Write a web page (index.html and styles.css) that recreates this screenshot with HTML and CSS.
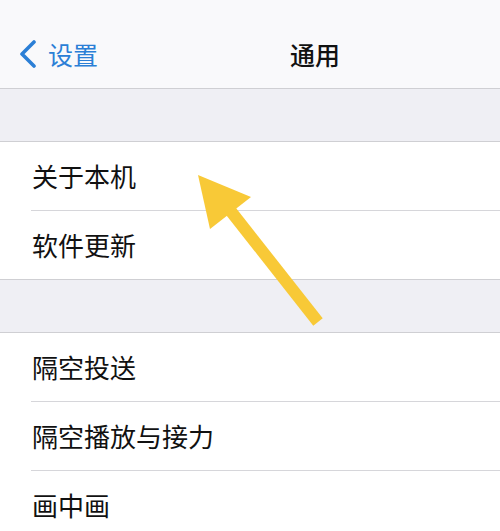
FILE: index.html
```html
<!DOCTYPE html>
<html lang="zh-CN">
<head>
<meta charset="utf-8">
<link rel="stylesheet" href="styles.css">
</head>
<body>
<div class="screen">
  <header class="nav">
    <div class="back">
      <svg class="chev" width="20" height="28" viewBox="0 0 20 28"><path d="M16 2 L4 14 L16 26" fill="none" stroke="#2b7fd6" stroke-width="3.6" stroke-linecap="round" stroke-linejoin="round"/></svg>
      <span class="back-label">设置</span>
    </div>
    <div class="title">通用</div>
  </header>
  <div class="spacer"></div>
  <div class="group">
    <div class="row">关于本机</div>
    <div class="row last">软件更新</div>
  </div>
  <div class="spacer"></div>
  <div class="group">
    <div class="row">隔空投送</div>
    <div class="row">隔空播放与接力</div>
    <div class="row last">画中画</div>
  </div>
  <svg class="arrow" width="500" height="531" viewBox="0 0 500 531">
    <line x1="222" y1="200" x2="318" y2="322" stroke="#f8c937" stroke-width="12" stroke-linecap="butt"/>
    <polygon points="198,175 251,197 210,229" fill="#f8c937"/>
  </svg>
</div>
</body>
</html>
```
FILE: styles.css
```css
html, body {
  margin: 0;
  padding: 0;
}
body {
  width: 500px;
  height: 531px;
  overflow: hidden;
  background: #ffffff;
  font-family: "Noto Sans CJK SC", "Noto Sans", sans-serif;
  color: #111111;
}
.screen {
  position: relative;
  width: 500px;
  height: 531px;
  overflow: hidden;
}
.nav {
  height: 89px;
  box-sizing: border-box;
  background: #f9f9fb;
  border-bottom: 1px solid #cfcfd3;
  display: flex;
  align-items: center;
  padding-top: 20px;
}
.back {
  display: flex;
  align-items: center;
  padding-left: 18px;
  gap: 10px;
}
.chev {
  display: block;
}
.back-label {
  font-size: 25px;
  color: #2b7fd6;
  line-height: 1;
}
.title {
  margin-left: 192px;
  font-size: 25px;
  font-weight: 500;
  line-height: 1;
  color: #111;
}
.spacer {
  height: 53px;
  box-sizing: border-box;
  background: #efeff4;
  border-bottom: 1px solid #cfcfd3;
}
.group {
  background: #ffffff;
}
.row {
  position: relative;
  height: 69px;
  box-sizing: border-box;
  padding-left: 32px;
  display: flex;
  align-items: center;
  font-size: 26px;
  line-height: 1;
  border-bottom: 1px solid transparent;
}
.row::after {
  content: "";
  position: absolute;
  left: 31px;
  right: 0;
  bottom: -1px;
  height: 1px;
  background: #d6d6da;
}
.row.last::after {
  left: 0;
  background: #cfcfd3;
}
.arrow {
  position: absolute;
  left: 0;
  top: 0;
  pointer-events: none;
}
```
